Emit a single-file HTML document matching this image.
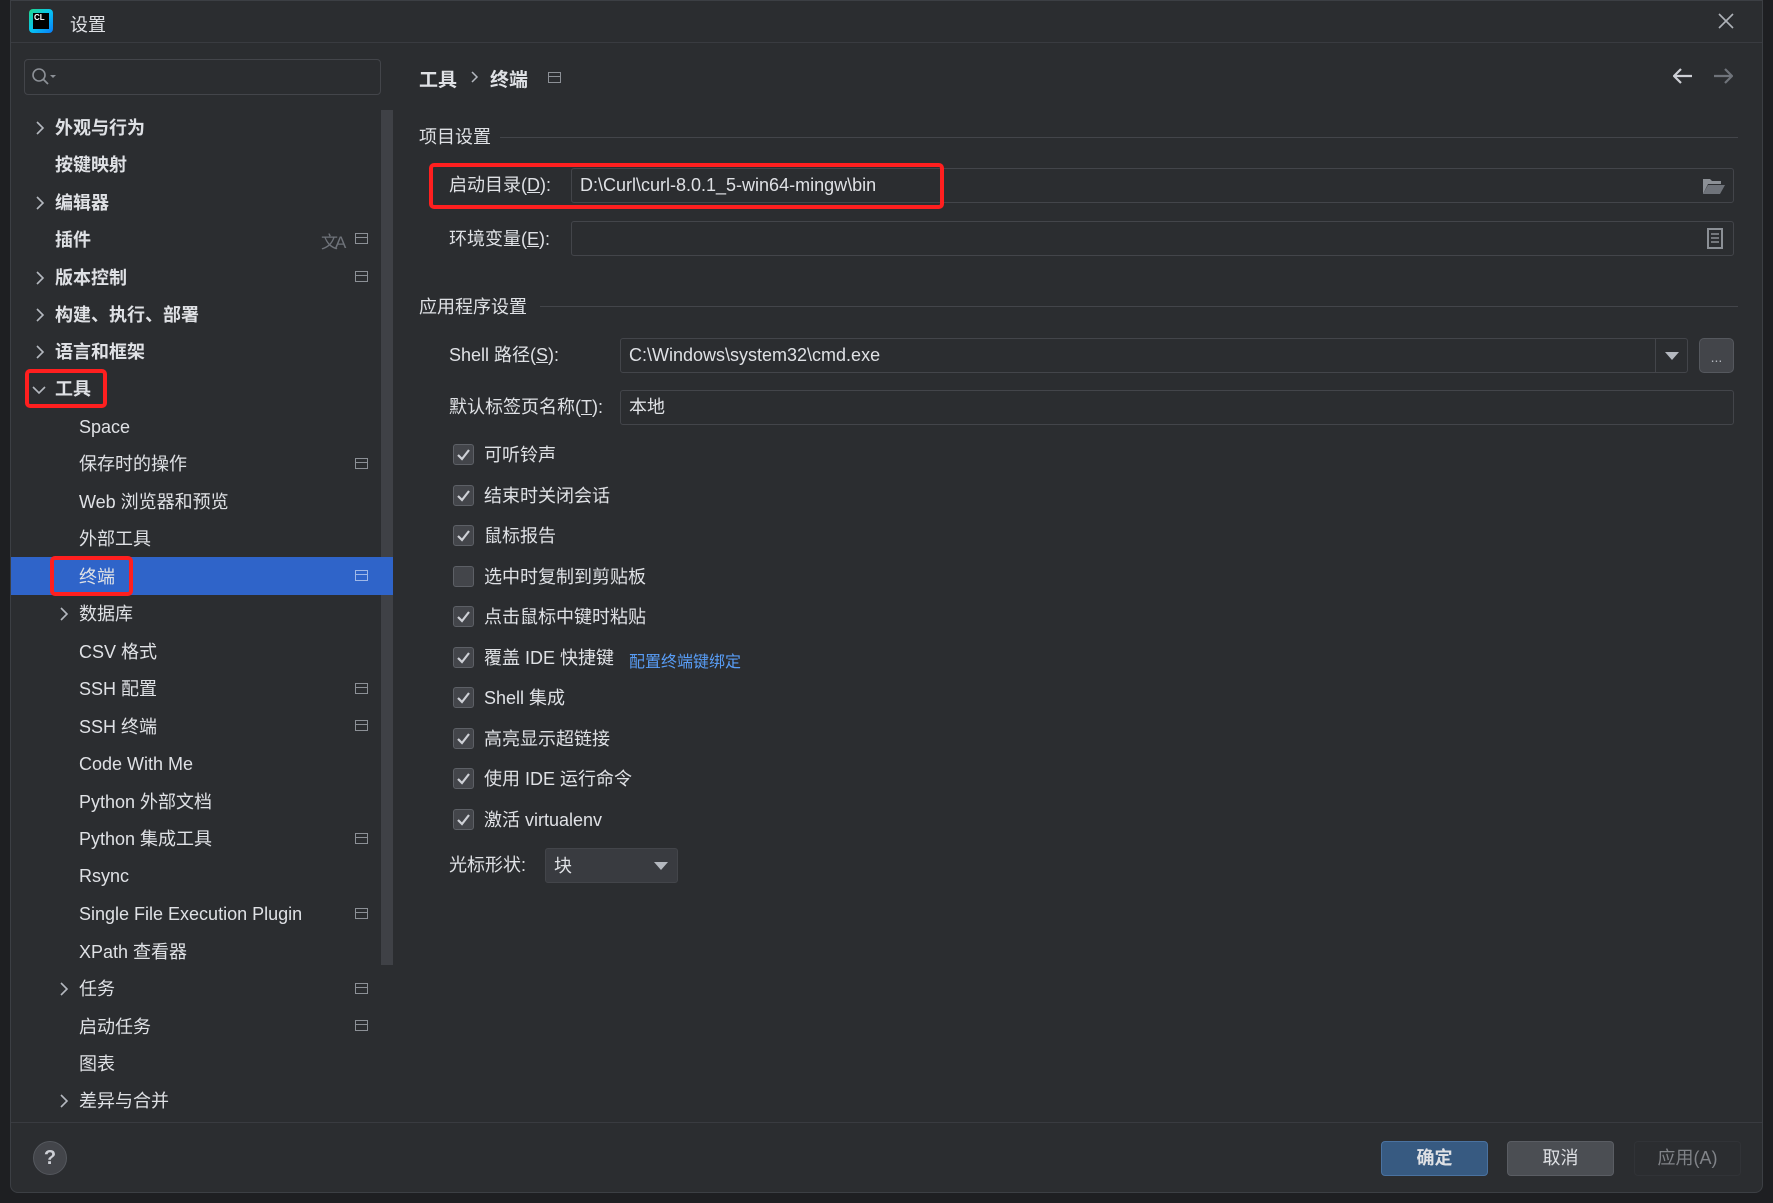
<!DOCTYPE html>
<html><head><meta charset="utf-8"><style>
*{margin:0;padding:0;box-sizing:border-box}
body{width:1773px;height:1203px;background:#1e1f22;overflow:hidden;font-family:"Liberation Sans","Noto Sans CJK SC",sans-serif;color:#dfe1e5;position:relative}
.a{position:absolute;white-space:nowrap}
#dlg{position:absolute;left:10px;top:0;width:1753px;height:1193px;background:#2b2d30;border:1px solid #3c3f44;border-radius:0 0 8px 8px}
.t1{font-size:18px;font-weight:bold;line-height:24px}
.t2{font-size:18px;line-height:24px}
.ch{position:absolute}
.ico{width:13px;height:11px;border:1.5px solid #8c9096;background:linear-gradient(#2b2d30 0 3px,#8c9096 3px 4px,#2b2d30 4px);}
.inp{position:absolute;border:1px solid #43454a;background:#2b2d30;border-radius:3px}
.cb{position:absolute;left:453px;width:21px;height:21px;border:1.5px solid #5d6066;background:#43454a;border-radius:3px}
.cb svg{position:absolute;left:2px;top:2px}
.cl{position:absolute;left:484px;font-size:18px;line-height:24px}
.red{position:absolute;border:4px solid #ff1f1f;border-radius:5px}
.btn{position:absolute;top:1141px;height:35px;width:107px;border-radius:4px;font-size:18px;line-height:33px;text-align:center}
</style></head><body>
<div id="dlg"></div>
<!-- title -->
<div class="a" style="left:29px;top:9px;width:24px;height:24px;background:linear-gradient(135deg,#21d789,#07c3f2 50%,#087cfa);border-radius:4px"></div>
<div class="a" style="left:33px;top:13px;width:16px;height:16px;background:#000;color:#fff;font-size:8px;font-weight:bold;line-height:10px;padding-left:1px">CL</div>
<div class="a" style="left:70px;top:11px;font-size:18px;color:#dfe1e5">设置</div>
<svg class="a" style="left:1718px;top:13px" width="16" height="16"><path d="M1 1l14 14M15 1L1 15" stroke="#aeb2b8" stroke-width="1.6"/></svg>
<div class="a" style="left:11px;top:42px;width:1751px;height:1px;background:#393b40"></div>
<!-- search -->
<div class="inp" style="left:24px;top:59px;width:357px;height:36px;border-radius:4px"></div>
<svg class="a" style="left:31px;top:67px" width="28" height="20"><circle cx="8" cy="8" r="6" fill="none" stroke="#8c9096" stroke-width="1.6"/><line x1="12.5" y1="12.5" x2="17" y2="17" stroke="#8c9096" stroke-width="1.8"/><path d="M19 8h6l-3 3z" fill="#8c9096"/></svg>
<!-- scrollbar -->
<div class="a" style="left:381px;top:110px;width:12px;height:855px;background:#3f4146"></div>
<!-- selected -->
<div class="a" style="left:11px;top:557px;width:382px;height:38px;background:#2f64c9"></div>
<svg width="0" height="0" style="position:absolute"><defs><path id="cr" d="M2 1l6 6-6 6" fill="none" stroke="#b4b8bf" stroke-width="1.6"/></defs></svg>
<svg class="ch" style="left:35px;top:121px" width="10" height="14"><use href="#cr"/></svg>
<div class="a t1" style="left:55px;top:116px">外观与行为</div>
<div class="a t1" style="left:55px;top:153px">按键映射</div>
<svg class="ch" style="left:35px;top:196px" width="10" height="14"><use href="#cr"/></svg>
<div class="a t1" style="left:55px;top:191px">编辑器</div>
<div class="a t1" style="left:55px;top:228px">插件</div>
<div class="a" style="left:321px;top:228px;font-size:17px;color:#6f737a;letter-spacing:-3px">文A</div>
<svg class="ch" style="left:35px;top:271px" width="10" height="14"><use href="#cr"/></svg>
<div class="a t1" style="left:55px;top:266px">版本控制</div>
<svg class="ch" style="left:35px;top:308px" width="10" height="14"><use href="#cr"/></svg>
<div class="a t1" style="left:55px;top:303px">构建、执行、部署</div>
<svg class="ch" style="left:35px;top:345px" width="10" height="14"><use href="#cr"/></svg>
<div class="a t1" style="left:55px;top:340px">语言和框架</div>
<svg class="ch" style="left:32px;top:385px" width="14" height="10"><path d="M1 2l6 6 6-6" fill="none" stroke="#b4b8bf" stroke-width="1.6"/></svg>
<div class="a t1" style="left:55px;top:377px">工具</div>
<div class="a t2" style="left:79px;top:415px">Space</div>
<div class="a t2" style="left:79px;top:452px">保存时的操作</div>
<div class="a t2" style="left:79px;top:490px">Web 浏览器和预览</div>
<div class="a t2" style="left:79px;top:527px">外部工具</div>
<div class="a t2" style="left:79px;top:565px">终端</div>
<svg class="ch" style="left:59px;top:607px" width="10" height="14"><use href="#cr"/></svg>
<div class="a t2" style="left:79px;top:602px">数据库</div>
<div class="a t2" style="left:79px;top:640px">CSV 格式</div>
<div class="a t2" style="left:79px;top:677px">SSH 配置</div>
<div class="a t2" style="left:79px;top:715px">SSH 终端</div>
<div class="a t2" style="left:79px;top:752px">Code With Me</div>
<div class="a t2" style="left:79px;top:790px">Python 外部文档</div>
<div class="a t2" style="left:79px;top:827px">Python 集成工具</div>
<div class="a t2" style="left:79px;top:864px">Rsync</div>
<div class="a t2" style="left:79px;top:902px">Single File Execution Plugin</div>
<div class="a t2" style="left:79px;top:940px">XPath 查看器</div>
<svg class="ch" style="left:59px;top:982px" width="10" height="14"><use href="#cr"/></svg>
<div class="a t2" style="left:79px;top:977px">任务</div>
<div class="a t2" style="left:79px;top:1015px">启动任务</div>
<div class="a t2" style="left:79px;top:1052px">图表</div>
<svg class="ch" style="left:59px;top:1094px" width="10" height="14"><use href="#cr"/></svg>
<div class="a t2" style="left:79px;top:1089px">差异与合并</div>
<!-- tree icons -->
<div class="a ico" style="left:355px;top:233px"></div>
<div class="a ico" style="left:355px;top:271px"></div>
<div class="a ico" style="left:355px;top:458px"></div>
<div class="a ico" style="left:355px;top:570px;border-color:#9fb8e8;background:linear-gradient(#2f64c9 0 3px,#9fb8e8 3px 4px,#2f64c9 4px)"></div>
<div class="a ico" style="left:355px;top:683px"></div>
<div class="a ico" style="left:355px;top:720px"></div>
<div class="a ico" style="left:355px;top:833px"></div>
<div class="a ico" style="left:355px;top:908px"></div>
<div class="a ico" style="left:355px;top:983px"></div>
<div class="a ico" style="left:355px;top:1020px"></div>
<div class="red" style="left:25px;top:369px;width:82px;height:39px"></div>
<div class="red" style="left:50px;top:556px;width:83px;height:40px"></div>
<!-- right -->
<div class="a" style="left:419px;top:65px;font-size:19px;font-weight:bold">工具</div>
<svg class="a" style="left:471px;top:71px" width="8" height="12"><path d="M1 1l5 5-5 5" fill="none" stroke="#b4b8bf" stroke-width="1.5"/></svg>
<div class="a" style="left:490px;top:65px;font-size:19px;font-weight:bold">终端</div>
<div class="a ico" style="left:548px;top:72px"></div>
<svg class="a" style="left:1673px;top:68px" width="20" height="16"><path d="M19 8H2M8 1L1 8l7 7" fill="none" stroke="#ced0d6" stroke-width="2.2"/></svg>
<svg class="a" style="left:1713px;top:68px" width="20" height="16"><path d="M1 8h17M12 1l7 7-7 7" fill="none" stroke="#6f737a" stroke-width="2.2"/></svg>
<div class="a t2" style="left:419px;top:125px">项目设置</div>
<div class="a" style="left:500px;top:137px;width:1238px;height:1px;background:#43454a"></div>
<div class="a t2" style="left:449px;top:173px">启动目录(<u>D</u>):</div>
<div class="inp" style="left:571px;top:168px;width:1163px;height:35px"></div>
<div class="a t2" style="left:580px;top:173px">D:\Curl\curl-8.0.1_5-win64-mingw\bin</div>
<svg class="a" style="left:1702px;top:176px" width="24" height="20"><path d="M1 3h7l2 2h9v3H6L1 18z" fill="#8c9096"/><path d="M6 9h17l-5 9H1z" fill="#6f737a"/></svg>
<div class="red" style="left:429px;top:163px;width:515px;height:46px"></div>
<div class="a t2" style="left:449px;top:227px">环境变量(<u>E</u>):</div>
<div class="inp" style="left:571px;top:221px;width:1163px;height:35px"></div>
<svg class="a" style="left:1707px;top:228px" width="16" height="21"><rect x="1" y="1" width="14" height="19" fill="none" stroke="#8c9096" stroke-width="2"/><path d="M4 6h8M4 10h8M4 14h8" stroke="#8c9096" stroke-width="1.5"/></svg>
<div class="a t2" style="left:419px;top:295px">应用程序设置</div>
<div class="a" style="left:540px;top:306px;width:1198px;height:1px;background:#43454a"></div>
<div class="a t2" style="left:449px;top:343px">Shell 路径(<u>S</u>):</div>
<div class="inp" style="left:620px;top:338px;width:1068px;height:35px"></div>
<div class="a" style="left:1655px;top:339px;width:1px;height:33px;background:#43454a"></div>
<div class="a" style="left:1665px;top:352px;width:0;height:0;border-left:7px solid transparent;border-right:7px solid transparent;border-top:8px solid #b4b8bf"></div>
<div class="a t2" style="left:629px;top:343px">C:\Windows\system32\cmd.exe</div>
<div class="a" style="left:1699px;top:338px;width:35px;height:35px;background:#43454a;border:1px solid #55585e;border-radius:5px;text-align:center;font-size:14px;color:#b4b8bf;line-height:36px">...</div>
<div class="a t2" style="left:449px;top:395px">默认标签页名称(<u>T</u>):</div>
<div class="inp" style="left:620px;top:390px;width:1114px;height:35px"></div>
<div class="a t2" style="left:629px;top:395px">本地</div>
<!-- checkboxes -->
<div class="cb" style="top:444px"><svg width="15" height="15"><path d="M2 8l4 4 7-9" fill="none" stroke="#ced0d6" stroke-width="2.2"/></svg></div><div class="cl" style="top:443px">可听铃声</div>
<div class="cb" style="top:485px"><svg width="15" height="15"><path d="M2 8l4 4 7-9" fill="none" stroke="#ced0d6" stroke-width="2.2"/></svg></div><div class="cl" style="top:484px">结束时关闭会话</div>
<div class="cb" style="top:525px"><svg width="15" height="15"><path d="M2 8l4 4 7-9" fill="none" stroke="#ced0d6" stroke-width="2.2"/></svg></div><div class="cl" style="top:524px">鼠标报告</div>
<div class="cb" style="top:566px"></div><div class="cl" style="top:565px">选中时复制到剪贴板</div>
<div class="cb" style="top:606px"><svg width="15" height="15"><path d="M2 8l4 4 7-9" fill="none" stroke="#ced0d6" stroke-width="2.2"/></svg></div><div class="cl" style="top:605px">点击鼠标中键时粘贴</div>
<div class="cb" style="top:647px"><svg width="15" height="15"><path d="M2 8l4 4 7-9" fill="none" stroke="#ced0d6" stroke-width="2.2"/></svg></div><div class="cl" style="top:646px">覆盖 IDE 快捷键</div>
<div class="a" style="left:629px;top:648px;font-size:16px;color:#589df6">配置终端键绑定</div>
<div class="cb" style="top:687px"><svg width="15" height="15"><path d="M2 8l4 4 7-9" fill="none" stroke="#ced0d6" stroke-width="2.2"/></svg></div><div class="cl" style="top:686px">Shell 集成</div>
<div class="cb" style="top:728px"><svg width="15" height="15"><path d="M2 8l4 4 7-9" fill="none" stroke="#ced0d6" stroke-width="2.2"/></svg></div><div class="cl" style="top:727px">高亮显示超链接</div>
<div class="cb" style="top:768px"><svg width="15" height="15"><path d="M2 8l4 4 7-9" fill="none" stroke="#ced0d6" stroke-width="2.2"/></svg></div><div class="cl" style="top:767px">使用 IDE 运行命令</div>
<div class="cb" style="top:809px"><svg width="15" height="15"><path d="M2 8l4 4 7-9" fill="none" stroke="#ced0d6" stroke-width="2.2"/></svg></div><div class="cl" style="top:808px">激活 virtualenv</div>
<div class="a t2" style="left:449px;top:853px">光标形状:</div>
<div class="a" style="left:545px;top:848px;width:133px;height:35px;background:#393b40;border:1px solid #43454a;border-radius:3px"></div>
<div class="a t2" style="left:554px;top:854px">块</div>
<div class="a" style="left:654px;top:862px;width:0;height:0;border-left:7px solid transparent;border-right:7px solid transparent;border-top:8px solid #b4b8bf"></div>
<!-- footer -->
<div class="a" style="left:11px;top:1122px;width:1751px;height:1px;background:#393b40"></div>
<div class="a" style="left:33px;top:1141px;width:34px;height:34px;border-radius:50%;background:#43454a;border:1px solid #55585e;text-align:center;font-size:20px;font-weight:bold;line-height:32px;color:#ced0d6">?</div>
<div class="btn" style="left:1381px;background:#375a81;border:1px solid #4a72a0;font-weight:bold;color:#dfe1e5">确定</div>
<div class="btn" style="left:1507px;background:#4b4e53;border:1px solid #5a5d63;color:#dfe1e5">取消</div>
<div class="btn" style="left:1634px;background:#2b2d30;border:1px solid #313337;color:#808388">应用(A)</div>
</body></html>
